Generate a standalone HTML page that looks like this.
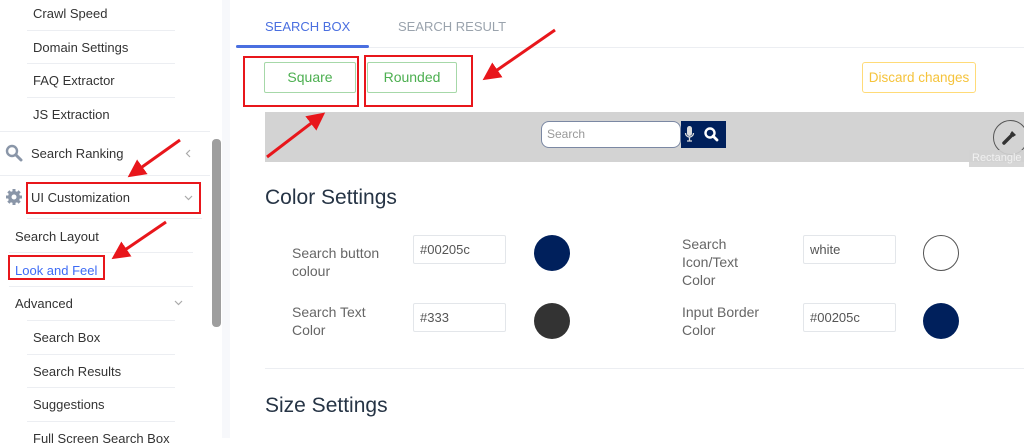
<!DOCTYPE html>
<html><head><meta charset="utf-8"><style>
*{margin:0;padding:0;box-sizing:border-box}
body{width:1024px;height:438px;overflow:hidden;background:#fff;font-family:"Liberation Sans",sans-serif;position:relative;color:#333}
.a{position:absolute;white-space:nowrap}
.sb{font-size:13px;color:#333}
.sep{position:absolute;height:1px;background:#eceef2}
.lbl{font-size:14px;color:#666;line-height:18px}
.inp{position:absolute;width:93px;height:29px;border:1px solid #e3e6ea;border-radius:2px;font-size:13px;color:#555;padding:6px 6px}
.c{position:absolute;width:36px;height:36px;border-radius:50%}
</style></head><body>
<div class="a sb" style="left:33px;top:6px">Crawl Speed</div>
<div class="sep" style="left:27px;top:30px;width:148px"></div>
<div class="a sb" style="left:33px;top:40px">Domain Settings</div>
<div class="sep" style="left:27px;top:63px;width:148px"></div>
<div class="a sb" style="left:33px;top:73px">FAQ Extractor</div>
<div class="sep" style="left:27px;top:97px;width:148px"></div>
<div class="a sb" style="left:33px;top:107px">JS Extraction</div>
<div class="sep" style="left:0;top:131px;width:210px"></div>
<svg class="a" style="left:5px;top:144px" width="18" height="18" viewBox="0 0 18 18"><circle cx="7" cy="7" r="5" fill="none" stroke="#8a96a8" stroke-width="2.4"/><path d="M11 11l5 5" stroke="#8a96a8" stroke-width="3" stroke-linecap="round"/></svg>
<div class="a sb" style="left:31px;top:146px">Search Ranking</div>
<svg class="a" style="left:185px;top:149px" width="6" height="9" viewBox="0 0 6 9"><path d="M5 1L1.5 4.5L5 8" stroke="#aaa" stroke-width="1.2" fill="none"/></svg>
<div class="sep" style="left:0;top:175px;width:210px"></div>
<svg class="a" style="left:5px;top:188px" width="18" height="18" viewBox="0 0 18 18"><g fill="#8a96a8"><circle cx="9" cy="9" r="6"/><rect x="7.5" y="1" width="3" height="16"/><rect x="1" y="7.5" width="16" height="3"/><rect x="7.5" y="1" width="3" height="16" transform="rotate(45 9 9)"/><rect x="7.5" y="1" width="3" height="16" transform="rotate(-45 9 9)"/></g><circle cx="9" cy="9" r="2.5" fill="#fff"/></svg>
<div class="a sb" style="left:31px;top:190px">UI Customization</div>
<svg class="a" style="left:184px;top:195px" width="9" height="6" viewBox="0 0 9 6"><path d="M1 1L4.5 4.5L8 1" stroke="#aaa" stroke-width="1.2" fill="none"/></svg>
<div class="a" style="left:26px;top:182px;width:175px;height:32px;border:2px solid #e8161b"></div>
<div class="sep" style="left:27px;top:218px;width:175px"></div>
<div class="a sb" style="left:15px;top:229px">Search Layout</div>
<div class="sep" style="left:9px;top:252px;width:184px"></div>
<div class="a sb" style="left:15px;top:263px;color:#3d6bf5">Look and Feel</div>
<div class="a" style="left:8px;top:255px;width:97px;height:25px;border:2px solid #e8161b"></div>
<div class="sep" style="left:9px;top:286px;width:184px"></div>
<div class="a sb" style="left:15px;top:296px">Advanced</div>
<svg class="a" style="left:174px;top:300px" width="9" height="6" viewBox="0 0 9 6"><path d="M1 1L4.5 4.5L8 1" stroke="#aaa" stroke-width="1.2" fill="none"/></svg>
<div class="sep" style="left:27px;top:320px;width:148px"></div>
<div class="a sb" style="left:33px;top:330px">Search Box</div>
<div class="sep" style="left:27px;top:354px;width:148px"></div>
<div class="a sb" style="left:33px;top:364px">Search Results</div>
<div class="sep" style="left:27px;top:387px;width:148px"></div>
<div class="a sb" style="left:33px;top:397px">Suggestions</div>
<div class="sep" style="left:27px;top:421px;width:148px"></div>
<div class="a sb" style="left:33px;top:431px">Full Screen Search Box</div>
<div class="a" style="left:222px;top:0;width:8px;height:438px;background:#f7f8fb"></div>
<div class="a" style="left:212px;top:139px;width:9px;height:188px;background:#9e9e9e;border-radius:4px"></div>
<div class="a" style="left:265px;top:19px;font-size:13px;color:#4a6fe0">SEARCH BOX</div>
<div class="a" style="left:398px;top:19px;font-size:13px;color:#9aa3ad">SEARCH RESULT</div>
<div class="a" style="left:236px;top:47px;width:788px;height:1px;background:#eceef2"></div>
<div class="a" style="left:236px;top:45px;width:133px;height:3px;background:#4a6fe0;border-radius:2px"></div>
<div class="a" style="left:264px;top:62px;width:92px;height:31px;border:1px solid #a6d8a8;border-radius:2px;font-size:14px;color:#4caf50;text-align:center;line-height:29px">Square</div>
<div class="a" style="left:243px;top:56px;width:116px;height:51px;border:2px solid #e8161b"></div>
<div class="a" style="left:367px;top:62px;width:90px;height:31px;border:1px solid #a6d8a8;border-radius:2px;font-size:14px;color:#4caf50;text-align:center;line-height:29px">Rounded</div>
<div class="a" style="left:364px;top:55px;width:109px;height:52px;border:2px solid #e8161b"></div>
<div class="a" style="left:862px;top:62px;width:114px;height:31px;border:1px solid #ffdb78;border-radius:3px;font-size:13.5px;color:#f5c33b;text-align:center;line-height:29px">Discard changes</div>
<div class="a" style="left:265px;top:112px;width:759px;height:50px;background:#d3d3d3"></div>
<div class="a" style="left:541px;top:121px;width:140px;height:27px;background:#fff;border:1px solid #7b88a3;border-radius:8px;font-size:12px;color:#999;padding:5px 5px">Search</div>
<div class="a" style="left:681px;top:121px;width:45px;height:27px;background:#00205c"></div>
<svg class="a" style="left:684px;top:125px" width="40" height="20" viewBox="0 0 40 20"><rect x="3" y="1" width="5" height="10" rx="2.5" fill="#ddd"/><path d="M1.5 8a4 4 0 0 0 8 0M5.5 12v4M3 16h5" stroke="#ddd" stroke-width="1.3" fill="none"/><circle cx="26" cy="8" r="4.5" fill="none" stroke="#fff" stroke-width="2.4"/><path d="M29 11l4 4" stroke="#fff" stroke-width="2.8" stroke-linecap="round"/></svg>
<div class="a" style="left:993px;top:120px;width:35px;height:35px;border:1.5px solid #555;border-radius:50%"></div>
<svg class="a" style="left:1000px;top:127px" width="20" height="20" viewBox="0 0 20 20"><path d="M4 16l7-7" stroke="#333" stroke-width="3.5" stroke-linecap="round"/><path d="M12 4l4 4-3 2-3-3z" fill="#333"/></svg>
<div class="a" style="left:969px;top:150px;width:55px;height:17px;background:rgba(210,210,210,.9);font-size:11px;color:#f0f0f0;padding-left:3px;line-height:17px">Rectangle</div>
<div class="a" style="left:265px;top:186px;font-size:21px;color:#263445">Color Settings</div>
<div class="a lbl" style="left:292px;top:244px">Search button<br>colour</div>
<div class="inp" style="left:413px;top:235px">#00205c</div>
<div class="c" style="left:534px;top:235px;background:#00205c"></div>
<div class="a lbl" style="left:682px;top:235px">Search<br>Icon/Text<br>Color</div>
<div class="inp" style="left:803px;top:235px">white</div>
<div class="c" style="left:923px;top:235px;border:1px solid #555;background:#fff"></div>
<div class="a lbl" style="left:292px;top:303px">Search Text<br>Color</div>
<div class="inp" style="left:413px;top:303px">#333</div>
<div class="c" style="left:534px;top:303px;background:#333"></div>
<div class="a lbl" style="left:682px;top:303px">Input Border<br>Color</div>
<div class="inp" style="left:803px;top:303px">#00205c</div>
<div class="c" style="left:923px;top:303px;background:#00205c"></div>
<div class="a" style="left:265px;top:368px;width:759px;height:1px;background:#eceef2"></div>
<div class="a" style="left:265px;top:394px;font-size:21px;color:#263445">Size Settings</div>
<svg class="a" style="left:0;top:0" width="1024" height="438"><defs><marker id="h" markerWidth="6" markerHeight="6" refX="3" refY="3" orient="auto" markerUnits="strokeWidth"><path d="M0 0L6 3L0 6z" fill="#e8161b"/></marker></defs>
<g stroke="#e8161b" stroke-width="3" fill="none" marker-end="url(#h)">
<line x1="555" y1="30" x2="490" y2="75"/>
<line x1="267" y1="157" x2="318" y2="118"/>
<line x1="180" y1="140" x2="135" y2="172"/>
<line x1="166" y1="222" x2="119" y2="254"/>
</g></svg>
</body></html>
